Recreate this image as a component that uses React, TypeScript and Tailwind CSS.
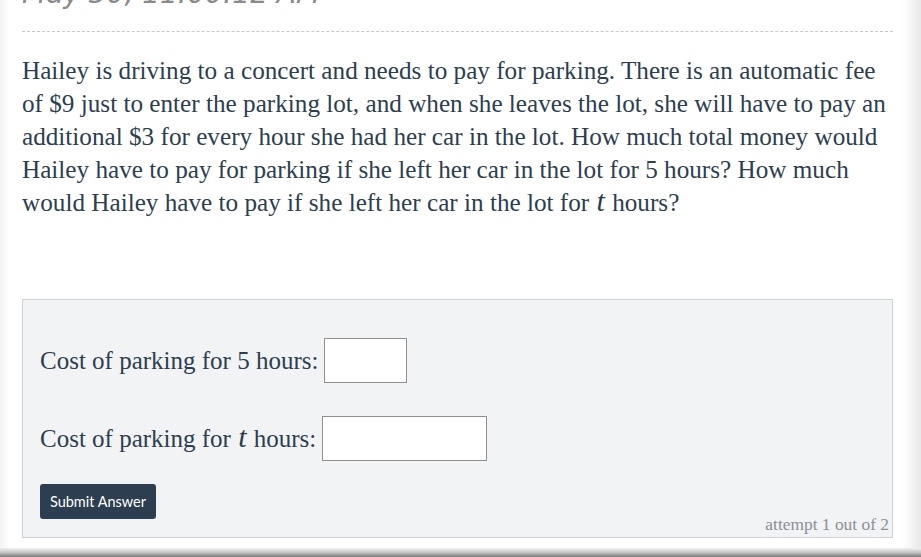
export default function App() {
  return (
    <div className="relative h-[557px] w-[921px] overflow-hidden bg-white font-['Liberation_Serif',serif]">
      <div className="flex h-[548px] flex-col shadow-[inset_10px_0_10px_-8px_rgba(0,0,0,0.08),inset_-28px_0_14px_-20px_rgba(0,0,0,0.10)]">
        <div className="pl-[22px] pr-[28px]">
          <div className="h-[31px] overflow-hidden">
            <div className="-mt-[21px] font-['DejaVu_Sans',sans-serif] text-[28px] font-light italic leading-[30px] text-[#8a8a8a]">
              May 30, 11:00:12 AM
            </div>
          </div>
          <div className="border-t border-dashed border-[#c8c8c8]" />
          <p className="mt-[22px] whitespace-nowrap text-[25.2px] leading-[33px] text-[#2c3e50]">
            Hailey is driving to a concert and needs to pay for parking. There is an automatic fee
            <br />
            of $9 just to enter the parking lot, and when she leaves the lot, she will have to pay an
            <br />
            additional $3 for every hour she had her car in the lot. How much total money would
            <br />
            Hailey have to pay for parking if she left her car in the lot for 5 hours? How much
            <br />
            would Hailey have to pay if she left her car in the lot for{' '}
            <i className="mx-[1px] text-[30px] leading-[20px]">t</i> hours?
          </p>
          <div className="mt-[80px] h-[239px] border border-[#cfd2d6] bg-[#f2f3f5] pl-[17px] pr-[3px] pt-[38px]">
            <div className="flex items-center gap-[6px] text-[25px] text-[#2c3e50]">
              <span>Cost of parking for 5 hours:</span>
              <div className="h-[45px] w-[83px] border border-[#8f8f8f] bg-white" />
            </div>
            <div className="mt-[33px] flex items-center gap-[6px] text-[25px] text-[#2c3e50]">
              <span>
                Cost of parking for <i className="mx-[1px] text-[30px] leading-[20px]">t</i> hours:
              </span>
              <div className="h-[45px] w-[165px] border border-[#8f8f8f] bg-white" />
            </div>
            <div className="mt-[23px] flex items-end justify-between">
              <button className="h-[35px] w-[116px] rounded-[3px] bg-[#2c3e50] font-['Lato',sans-serif] text-[14.5px] text-white">
                Submit Answer
              </button>
              <span className="-mb-[17px] text-[17.4px] leading-[24px] text-[#8b9096]">attempt 1 out of 2</span>
            </div>
          </div>
        </div>
      </div>
      <div className="h-[9px] bg-gradient-to-b from-[#f2f2f2] via-[#c4c4c4] to-[#7a7a7a]" />
    </div>
  );
}
